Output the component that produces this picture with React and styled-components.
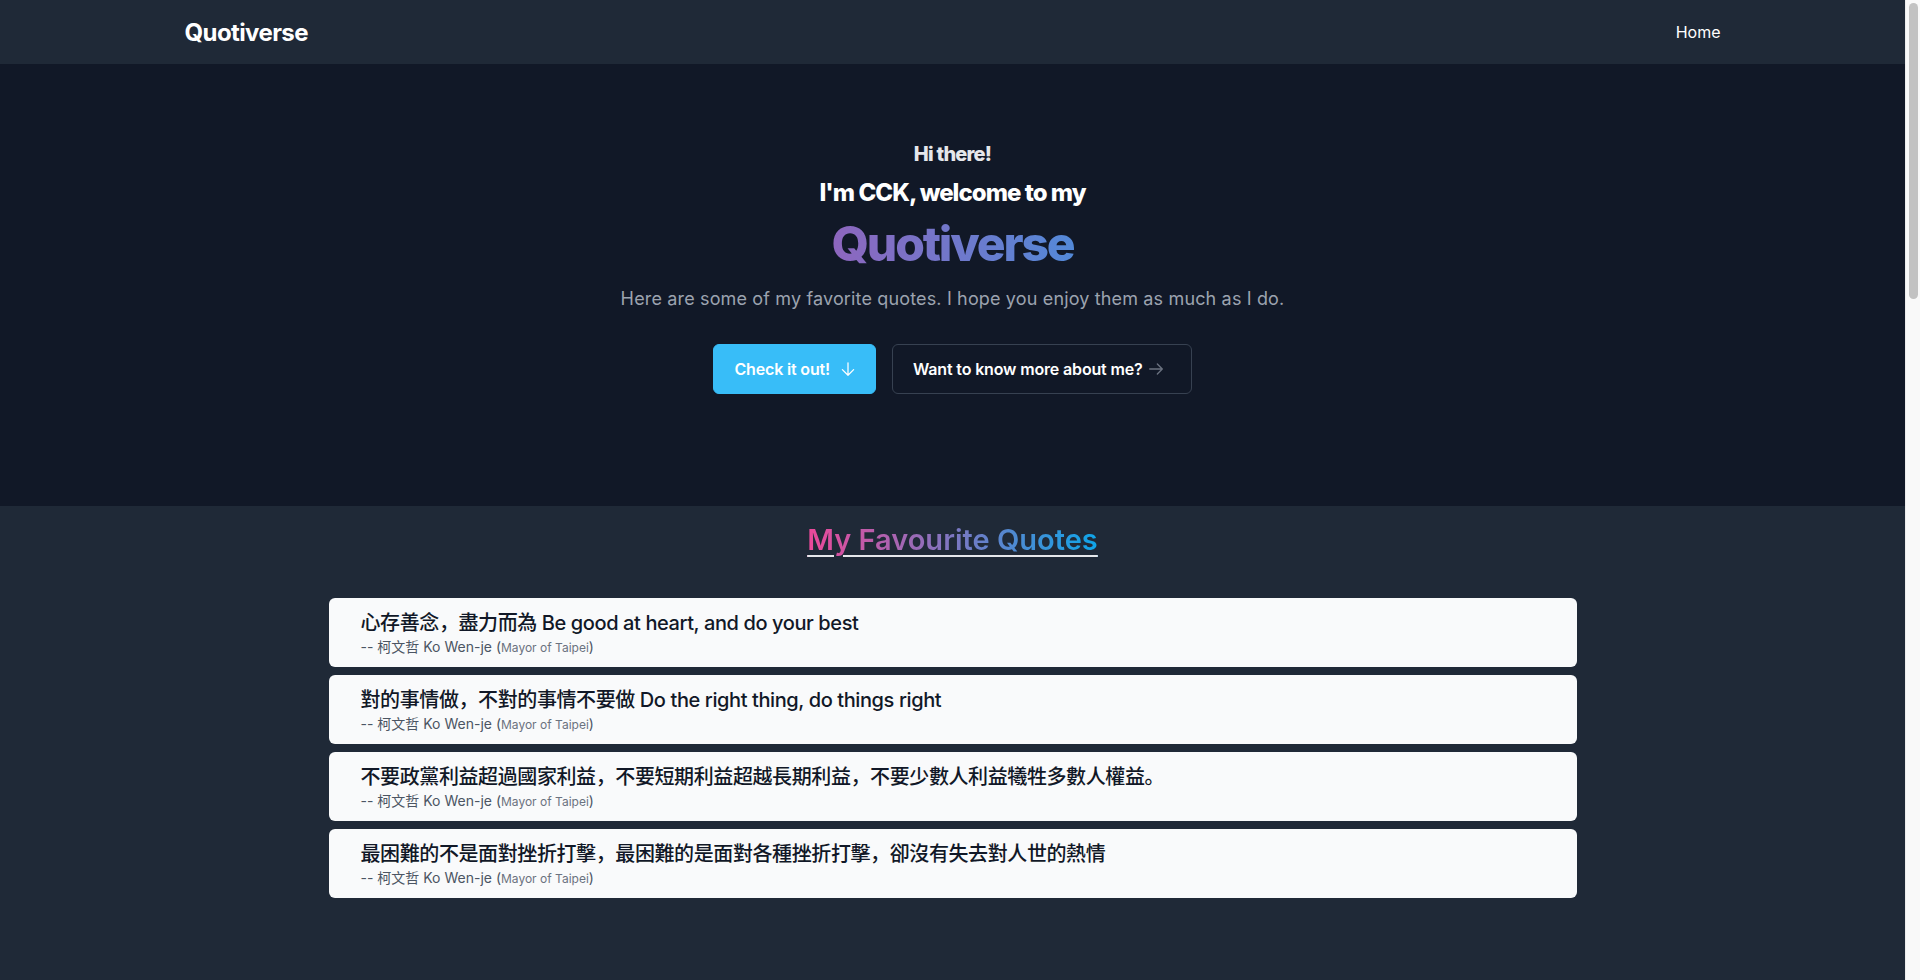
import React from "react";
import styled, { createGlobalStyle } from "styled-components";

const GlobalStyle = createGlobalStyle`
  * { box-sizing: border-box; }
  body {
    margin: 0;
    background: #1f2937;
    font-family: Inter, "Noto Sans CJK SC", sans-serif;
  }
`;

const quotes = [
  { text: "心存善念，盡力而為 Be good at heart, and do your best", author: "柯文哲 Ko Wen-je", title: "Mayor of Taipei" },
  { text: "對的事情做，不對的事情不要做 Do the right thing, do things right", author: "柯文哲 Ko Wen-je", title: "Mayor of Taipei" },
  { text: "不要政黨利益超過國家利益，不要短期利益超越長期利益，不要少數人利益犧牲多數人權益。", author: "柯文哲 Ko Wen-je", title: "Mayor of Taipei" },
  { text: "最困難的不是面對挫折打擊，最困難的是面對各種挫折打擊，卻沒有失去對人世的熱情", author: "柯文哲 Ko Wen-je", title: "Mayor of Taipei" },
];

const Page = styled.div`
  display: flex;
  align-items: flex-start;
`;

const Main = styled.main`
  flex: 1;
  min-width: 0;
`;

// the window's scroll rail, as it shows on the right edge
const ScrollRail = styled.div`
  position: sticky;
  top: 0;
  width: 15px;
  height: 100vh;
  flex-shrink: 0;
  background: #f9f9f9;
  border-left: 1px solid #ececec;
  padding: 3px 2px 0 3px;
`;

const ScrollThumb = styled.div`
  height: 296px;
  border-radius: 6px;
  background: #c2c2c2;
`;

const Nav = styled.nav`
  background: #1f2937;
  height: 64px;
`;

const NavInner = styled.div`
  max-width: 1536px;
  height: 100%;
  margin: 0 auto;
  display: flex;
  align-items: center;
  justify-content: space-between;
`;

const Logo = styled.a`
  color: #fff;
  font-size: 24px;
  font-weight: 700;
  text-decoration: none;
  letter-spacing: -0.025em;
`;

const NavLink = styled.a`
  color: #fff;
  font-size: 16px;
  text-decoration: none;
`;

const Hero = styled.section`
  background: #111827;
  padding: 76px 16px 112px;
  display: flex;
  flex-direction: column;
  align-items: center;
  text-align: center;
`;

const Greeting = styled.p`
  margin: 0;
  color: #e5e7eb;
  font-size: 20px;
  line-height: 28px;
  font-weight: 800;
  letter-spacing: -0.04em;
`;

const Welcome = styled.h2`
  margin: 9px 0 0;
  color: #fff;
  font-size: 24px;
  line-height: 32px;
  font-weight: 800;
  letter-spacing: -0.04em;
`;

const Brand = styled.h1`
  margin: 11px 0 0;
  font-size: 48px;
  line-height: 48px;
  font-weight: 800;
  letter-spacing: -0.045em;
  background: linear-gradient(to right, #8e66be, #5389d8);
  -webkit-background-clip: text;
  background-clip: text;
  color: transparent;
`;

const Lead = styled.p`
  margin: 17px 0 0;
  color: #9ca3af;
  font-size: 18px;
  line-height: 28px;
  letter-spacing: 0.15px;
`;

const Actions = styled.div`
  margin-top: 31px;
  display: flex;
  gap: 16px;
`;

const Button = styled.a`
  display: inline-flex;
  align-items: center;
  gap: ${(p) => (p.$primary ? "8px" : "4px")};
  padding: 12px ${(p) => (p.$primary ? "17px" : "26px")} 12px 20px;
  border-radius: 6px;
  border: 1px solid ${(p) => (p.$primary ? "#38bdf8" : "#374151")};
  background: ${(p) => (p.$primary ? "#38bdf8" : "transparent")};
  color: #fff;
  font-size: 16px;
  line-height: 24px;
  font-weight: 600;
  letter-spacing: -0.01em;
  text-decoration: none;
  svg {
    color: ${(p) => (p.$primary ? "#fff" : "#6b7280")};
  }
`;

const QuotesSection = styled.section`
  background: #1f2937;
  padding: 16px 16px 80px;
  min-height: calc(100vh - 506px);
`;

const SectionTitle = styled.h2`
  margin: 0 auto 40px;
  width: fit-content;
  font-size: 29px;
  line-height: 36px;
  font-weight: 600;
  text-decoration: underline;
  text-decoration-color: #e5e7eb;
  text-decoration-thickness: 2px;
  text-underline-offset: 5px;
  background: linear-gradient(to right, #ec4899, #0ea5e9);
  -webkit-background-clip: text;
  background-clip: text;
  color: transparent;
`;

const QuoteList = styled.ul`
  list-style: none;
  margin: 0 auto;
  padding: 0;
  max-width: 1248px;
  display: flex;
  flex-direction: column;
  gap: 8px;
`;

const QuoteCard = styled.li`
  background: #f9fafb;
  border-radius: 6px;
  padding: 11px 32px 9px;
`;

const QuoteText = styled.p`
  margin: 0;
  color: #111827;
  font-size: 20px;
  line-height: 28px;
  font-weight: 500;
  letter-spacing: -0.02em;
`;

const Author = styled.p`
  margin: 0;
  color: #4b5563;
  font-size: 14px;
  line-height: 20px;
  small {
    font-size: 12px;
    color: #6b7280;
  }
`;

const ArrowDown = () => (
  <svg width="20" height="20" viewBox="0 0 24 24" fill="none" stroke="currentColor" strokeWidth="1.5" strokeLinecap="round" strokeLinejoin="round">
    <path d="M12 4.5v15m0 0l6.75-6.75M12 19.5l-6.75-6.75" />
  </svg>
);

const ArrowRight = () => (
  <svg width="18" height="18" viewBox="0 0 20 20" fill="none" stroke="currentColor" strokeWidth="1.5" strokeLinecap="round" strokeLinejoin="round">
    <path d="M3 10h14m0 0l-5.5-5.5M17 10l-5.5 5.5" />
  </svg>
);

export default function App() {
  return (
    <Page>
      <GlobalStyle />
      <Main>
        <Nav>
          <NavInner>
            <Logo href="#">Quotiverse</Logo>
            <NavLink href="#">Home</NavLink>
          </NavInner>
        </Nav>
        <Hero>
          <Greeting>Hi there!</Greeting>
          <Welcome>I'm CCK, welcome to my</Welcome>
          <Brand>Quotiverse</Brand>
          <Lead>Here are some of my favorite quotes. I hope you enjoy them as much as I do.</Lead>
          <Actions>
            <Button $primary href="#quotes">
              Check it out! <ArrowDown />
            </Button>
            <Button href="#">
              Want to know more about me? <ArrowRight />
            </Button>
          </Actions>
        </Hero>
        <QuotesSection id="quotes">
          <SectionTitle>My Favourite Quotes</SectionTitle>
          <QuoteList>
            {quotes.map((q) => (
              <QuoteCard key={q.text}>
                <QuoteText>{q.text}</QuoteText>
                <Author>
                  -- {q.author} (<small>{q.title}</small>)
                </Author>
              </QuoteCard>
            ))}
          </QuoteList>
        </QuotesSection>
      </Main>
      <ScrollRail>
        <ScrollThumb />
      </ScrollRail>
    </Page>
  );
}
